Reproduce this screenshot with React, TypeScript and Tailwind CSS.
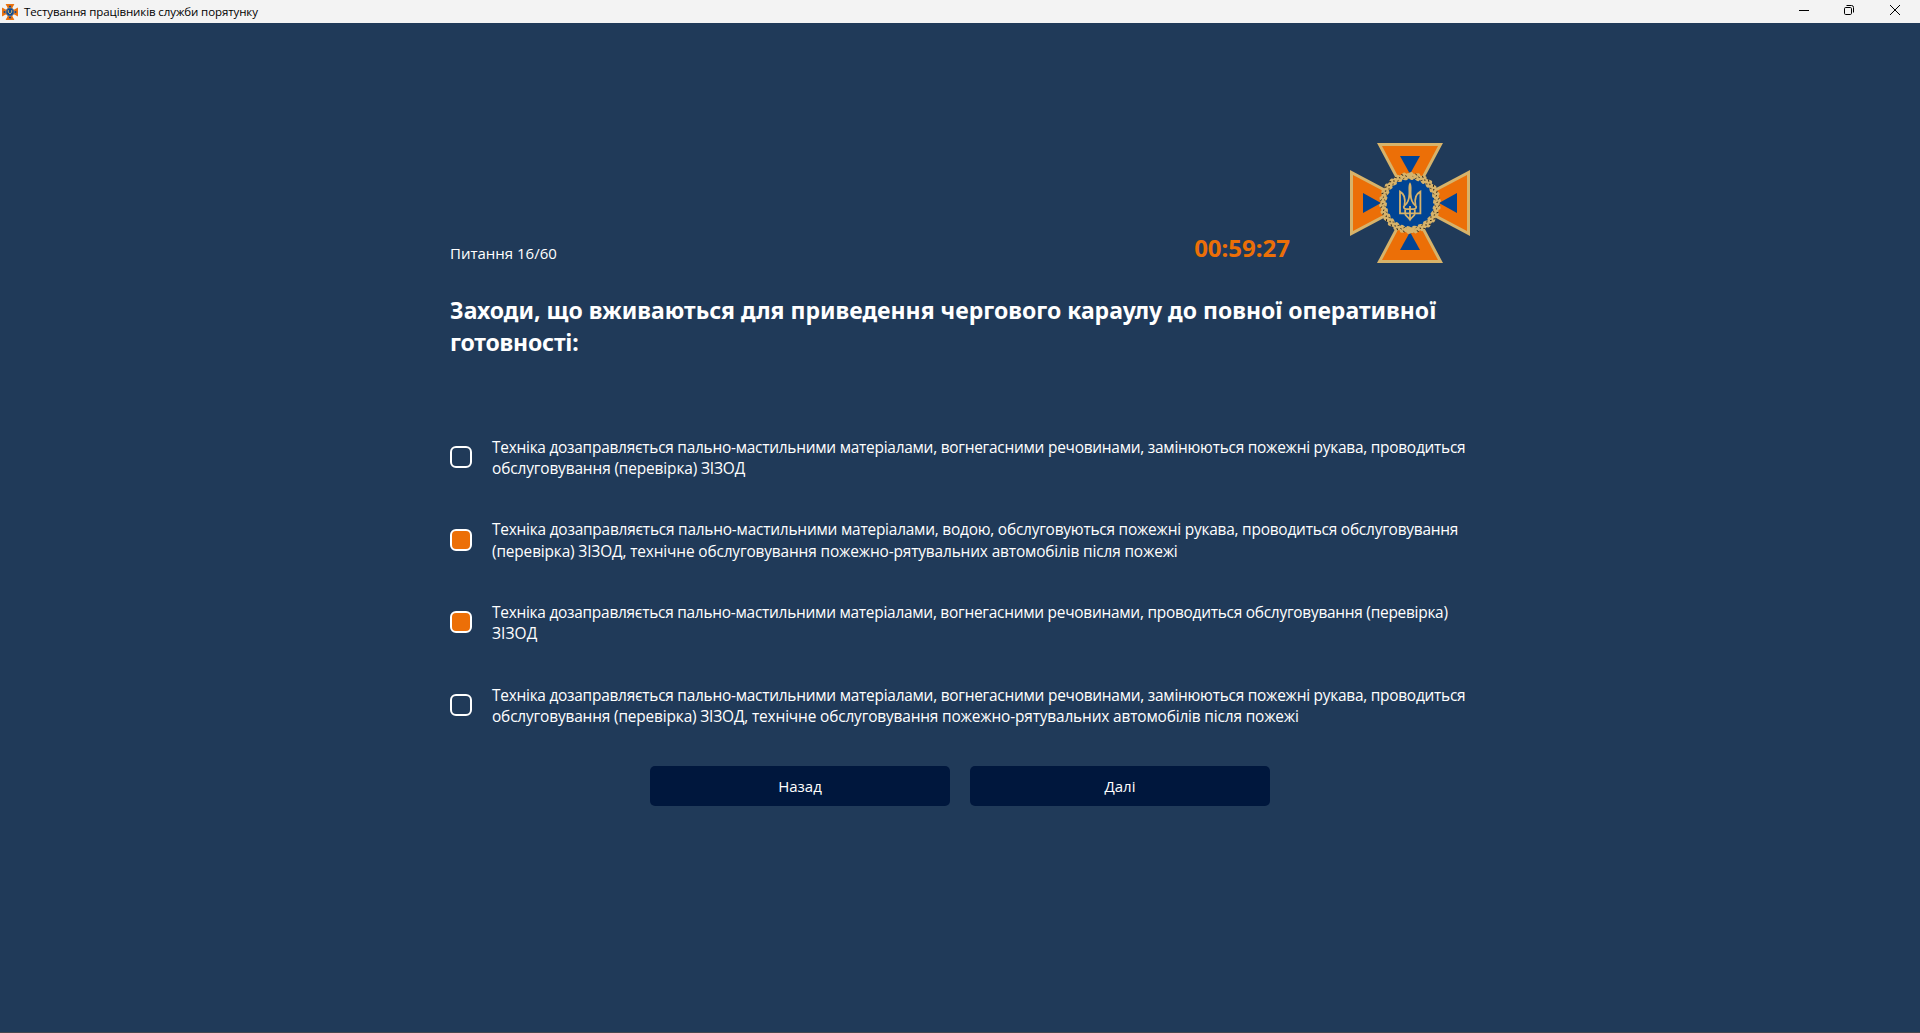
const LEAVES = Array.from({ length: 26 }, (_, i) => (i * 360) / 26);

function Emblem({ className, small = false }: { className: string; small?: boolean }) {
  return (
    <svg viewBox="0 0 120 120" className={className} aria-hidden="true">
      {[0, 90, 180, 270].map((angle) => (
        <g key={angle} transform={`rotate(${angle} 60 60)`}>
          <path d="M27 0H93L60 62Z" fill={small ? "#ec7a1c" : "#d7b36a"} />
          <path d="M32 3H88L60 56Z" fill="#ec6f07" />
          <path d="M50 13H70L60 31Z" fill="#004494" />
        </g>
      ))}
      {small ? (
        <>
          <circle cx="60" cy="60" r="31" fill="#0d4a94" stroke="#8a7f76" strokeWidth="7" />
          <path d="M47 46V62L60 74L73 62V46" fill="none" stroke="#e8c069" strokeWidth="7" />
        </>
      ) : (
        <>
          <circle cx="60" cy="60" r="27" fill="#004494" />
          <circle cx="60" cy="60" r="27" fill="none" stroke="#d7b36a" strokeWidth="5" />
          {LEAVES.map((angle) => (
            <g key={angle} transform={`rotate(${angle} 60 60)`}>
              <ellipse cx="60" cy="31.6" rx="3.4" ry="2" fill="#d7b36a" transform="rotate(-28 60 31.6)" />
              <ellipse cx="61" cy="35.2" rx="2.8" ry="1.5" fill="#d7b36a" transform="rotate(24 61 35.2)" />
              <path d="M58.4 30.2l1.6 1.4M62 32.4l1.2 1" stroke="#1b1a18" strokeWidth="0.9" />
              <path d="M60.5 34.2l-1.7 1.2" stroke="#3a3324" strokeWidth="0.7" />
            </g>
          ))}
          <path d="M56 31.5C57 29.5 63 29.5 64 31.5L60 36Z" fill="#d7b36a" />
          <path d="M54 87L60 84L66 87L63 90H57Z" fill="#d7b36a" />
          <g fill="none" stroke="#d7b36a" strokeWidth="1.8" strokeLinejoin="miter">
            <path d="M60 41C58.8 43 59.6 47 59.4 51C59.2 56 58 60 54.6 62.5C52.8 64 54 66.2 56.4 66.2H63.6C66 66.2 67.2 64 65.4 62.5C62 60 60.8 56 60.6 51C60.4 47 61.2 43 60 41Z" />
            <path d="M54.5 62.3C55.5 57 55.3 51.5 50 48.6V70.4H70.4V48.6C65 51.5 64.5 57 65.5 62.3" />
            <path d="M55.2 66.5V70.4C55.2 73 57.5 73.2 60 76.8C62.5 73.2 64.8 73 64.8 70.4V66.5M60 63V76" />
          </g>
        </>
      )}
    </svg>
  );
}

type Line = { text: string; spacing: string };
type Option = { checked: boolean; lines: Line[] };

const OPTIONS: Option[] = [
  {
    checked: false,
    lines: [
      { text: "Техніка дозаправляється пально-мастильними матеріалами, вогнегасними речовинами, замінюються пожежні рукава, проводиться", spacing: "tracking-[-0.255px]" },
      { text: "обслуговування (перевірка) ЗІЗОД", spacing: "tracking-[-0.14px]" },
    ],
  },
  {
    checked: true,
    lines: [
      { text: "Техніка дозаправляється пально-мастильними матеріалами, водою, обслуговуються пожежні рукава, проводиться обслуговування", spacing: "tracking-[-0.225px]" },
      { text: "(перевірка) ЗІЗОД, технічне обслуговування пожежно-рятувальних автомобілів після пожежі", spacing: "tracking-[-0.155px]" },
    ],
  },
  {
    checked: true,
    lines: [
      { text: "Техніка дозаправляється пально-мастильними матеріалами, вогнегасними речовинами, проводиться обслуговування (перевірка)", spacing: "tracking-[-0.26px]" },
      { text: "ЗІЗОД", spacing: "tracking-[0.1px]" },
    ],
  },
  {
    checked: false,
    lines: [
      { text: "Техніка дозаправляється пально-мастильними матеріалами, вогнегасними речовинами, замінюються пожежні рукава, проводиться", spacing: "tracking-[-0.255px]" },
      { text: "обслуговування (перевірка) ЗІЗОД, технічне обслуговування пожежно-рятувальних автомобілів після пожежі", spacing: "tracking-[-0.165px]" },
    ],
  },
];

function TitleBar() {
  return (
    <header className="flex h-[23px] items-center justify-between bg-[#f3f3f3] text-black">
      <div className="flex items-center gap-[6px] pl-[2px]">
        <Emblem small className="size-4" />
        <span className="text-[11.5px] leading-[22px] tracking-[-0.1px] whitespace-nowrap">
          Тестування працівників служби порятунку
        </span>
      </div>
      <div className="flex h-full items-start pr-[2px]">
        <button className="flex h-[20px] w-[44px] items-center justify-center" aria-label="Згорнути">
          <svg width="10" height="10" viewBox="0 0 10 10" shapeRendering="crispEdges">
            <path d="M0 5.5H10" stroke="#000" />
          </svg>
        </button>
        <button className="flex h-[20px] w-[46px] items-center justify-center" aria-label="Відновити">
          <svg width="10" height="10" viewBox="0 0 10 10" fill="none" stroke="#000">
            <rect x="0.5" y="2.5" width="7" height="7" rx="1.2" />
            <path d="M2.5 0.5H7.5A2 2 0 0 1 9.5 2.5V7.5" />
          </svg>
        </button>
        <button className="flex h-[20px] w-[46px] items-center justify-center" aria-label="Закрити">
          <svg width="10" height="10" viewBox="0 0 10 10" stroke="#000">
            <path d="M0 0L10 10M10 0L0 10" />
          </svg>
        </button>
      </div>
    </header>
  );
}

function OptionRow({ checked, lines }: Option) {
  return (
    <label className="flex h-[42.66px] items-center gap-5">
      <span
        role="checkbox"
        aria-checked={checked}
        className={
          checked
            ? "size-[22px] shrink-0 rounded-[6px] border-2 border-white bg-[#ec6f07]"
            : "size-[22px] shrink-0 rounded-[6px] border-2 border-white"
        }
      />
      <span className="pt-[2px] text-[15.45px] leading-[21.33px]">
        {lines.map((line) => (
          <span key={line.text} className={`block whitespace-nowrap ${line.spacing}`}>
            {line.text}
          </span>
        ))}
      </span>
    </label>
  );
}

export default function App() {
  return (
    <div className="flex h-[1033px] w-[1920px] flex-col overflow-hidden border-b border-[#45474f] bg-[#203a59] font-['Open_Sans',sans-serif] text-white">
      <TitleBar />
      <main className="mx-auto w-[1020px] pt-[120px]">
        <div className="flex h-[120px] items-end">
          <span className="flex-1 text-[15px] leading-[20px]">Питання 16/60</span>
          <span className="mr-[60px] mb-[-1px] font-['Noto_Sans',sans-serif] text-2xl leading-8 font-bold text-[#ec6f07]">
            00:59:27
          </span>
          <Emblem className="size-[120px] shrink-0" />
        </div>
        <h1 className="mt-[31px] font-['Noto_Sans',sans-serif] text-[23px] leading-8 font-bold">
          Заходи, що вживаються для приведення чергового караулу до повної оперативної{" "}
          <span className="tracking-[-0.2px]">готовності:</span>
        </h1>
        <div className="mt-[77.6px] flex flex-col gap-10">
          {OPTIONS.map((option, i) => (
            <OptionRow key={i} {...option} />
          ))}
        </div>
        <div className="mt-[39.4px] flex justify-center gap-5">
          <button className="h-10 w-[300px] rounded-[5px] bg-[#00173d] pt-[2px] text-[15px]">Назад</button>
          <button className="h-10 w-[300px] rounded-[5px] bg-[#00173d] pt-[2px] text-[15px]">Далі</button>
        </div>
      </main>
    </div>
  );
}
